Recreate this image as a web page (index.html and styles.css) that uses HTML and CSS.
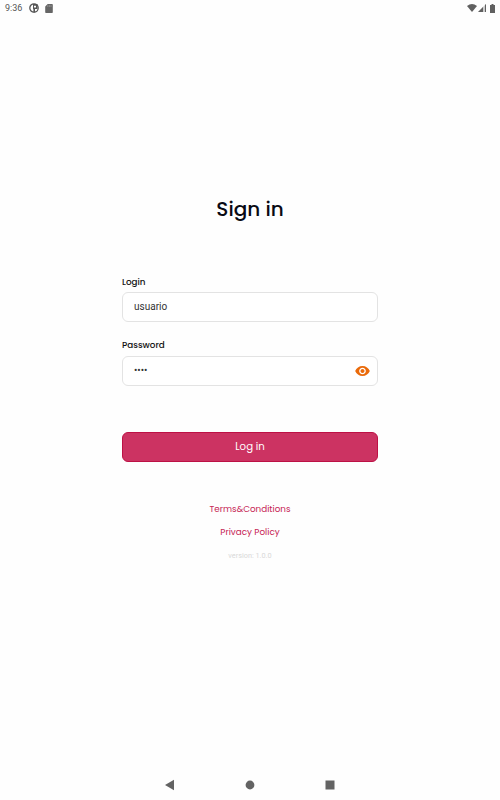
FILE: index.html
```
<!DOCTYPE html>
<html lang="en">
<head>
    <meta charset="UTF-8">
    <meta name="viewport" content="width=device-width, initial-scale=1.0">
    <title>Sign in</title>
    <link rel="stylesheet" href="styles.css">
</head>
<body>
    <header class="status-bar">
        <span class="time">9:36</span>
        <svg class="icon-app" width="10" height="10" viewBox="0 0 10 10">
            <circle cx="5" cy="5" r="4.2" fill="none" stroke="#555" stroke-width="1.3"/>
            <path d="M4 1h4.5v5H6v3.5H4.4V6H4Z" fill="#555"/>
            <path d="M5 2.8h2v1.8H5z" fill="#fff"/>
        </svg>
        <svg class="icon-sd" width="8" height="9" viewBox="0 0 8 9">
            <path d="M2.7 0H7q.8 0 .8.8v7.4q0 .8-.8.8H1q-.8 0-.8-.8V2.6Z" fill="#666"/>
            <path d="M2.8 1.3v1.5M4.4 1.3v1.5M6 1.3v1.5" stroke="#bbb" stroke-width=".6"/>
        </svg>
        <div class="status-right">
            <svg width="10" height="8" viewBox="0 0 10 8">
                <path d="M0 2Q5-2 10 2L5 8Z" fill="#606060"/>
            </svg>
            <svg width="8" height="8" viewBox="0 0 8 8">
                <path d="M8 0v8H0Z" fill="#ccc"/>
                <path d="M5 3v5H0ZM8 0v8H7V1Z" fill="#606060"/>
            </svg>
            <svg class="icon-battery" width="5" height="9" viewBox="0 0 5 9">
                <path d="M1.5 0h2v.9H5V9H0V.9h1.5Z" fill="#606060"/>
            </svg>
        </div>
    </header>

    <main class="container">
        <h1>Sign in</h1>
        <form class="login-form">
            <label for="login">Login</label>
            <div class="field">
                <input type="text" id="login" name="login" value="usuario">
            </div>
            <label for="password">Password</label>
            <div class="field">
                <input type="text" id="password" name="password" value="••••">
                <svg class="icon-eye" width="15" height="10" viewBox="1 4.5 22 15">
                    <path d="M12 4.5C7 4.5 2.73 7.61 1 12c1.73 4.39 6 7.5 11 7.5s9.27-3.11 11-7.5c-1.73-4.39-6-7.5-11-7.5zM12 17c-2.76 0-5-2.24-5-5s2.24-5 5-5 5 2.24 5 5-2.24 5-5 5zm0-8c-1.66 0-3 1.34-3 3s1.34 3 3 3 3-1.34 3-3-1.34-3-3-3z" fill="#ea6a0a"/>
                </svg>
            </div>
            <button type="button" class="login-btn">Log in</button>
        </form>
        <div class="links">
            <a href="#">Terms&amp;Conditions</a>
            <a href="#">Privacy Policy</a>
            <span class="version">version: 1.0.0</span>
        </div>
    </main>

    <nav class="nav-bar">
        <svg width="10" height="12" viewBox="0 0 10 12"><path d="M9 .8v10.4L0 6Z" fill="#636363"/></svg>
        <svg width="10" height="10" viewBox="0 0 10 10"><circle cx="5" cy="5" r="4.4" fill="#636363"/></svg>
        <svg width="10" height="10" viewBox="0 0 10 10"><path d="M.5.5h9v9h-9z" fill="#636363"/></svg>
    </nav>
</body>
</html>
```
FILE: styles.css
```
* {
    box-sizing: border-box;
}

body {
    margin: 0;
    height: 100vh;
    display: flex;
    flex-direction: column;
    overflow: hidden;
    background-color: #fefefe;
    font-family: Poppins, Inter, sans-serif;
}

svg {
    display: block;
}

.status-bar {
    display: flex;
    align-items: center;
    height: 16px;
    padding: 0 5px;
}

.time {
    width: 24px;
    font: 9px/16px Roboto, sans-serif;
    color: #555;
}

.icon-sd {
    margin-left: 6px;
}

.status-right {
    display: flex;
    align-items: center;
    gap: 1px;
    margin-left: auto;
}

.icon-battery {
    margin-left: 3px;
}

.container {
    flex: 1;
    width: 256px;
    margin: 0 auto;
    padding-top: 178px;
}

h1 {
    margin: 0 0 51px;
    font-size: 20px;
    line-height: 30px;
    font-weight: 500;
    text-align: center;
    color: #090a14;
}

.login-form {
    display: flex;
    flex-direction: column;
}

label {
    margin-bottom: 3.4px;
    font-size: 8.8px;
    line-height: 14px;
    font-weight: 500;
    color: #111;
}

.field {
    display: flex;
    align-items: center;
    height: 30px;
    margin-bottom: 16px;
    padding: 0 7px 0 11px;
    border: 1px solid #e3e3e3;
    border-radius: 6px;
    background-color: #fff;
}

.field input {
    flex: 1;
    min-width: 0;
    padding: 0;
    border: none;
    outline: none;
    background: none;
    font: 10px/14px Roboto, sans-serif;
    color: #333;
}

.login-btn {
    height: 30px;
    margin-top: 30.2px;
    padding: 0;
    border: 1px solid #bd1145;
    border-radius: 6px;
    background-color: #cc3362;
    color: #fff;
    font-family: inherit;
    font-size: 10.2px;
}

.links {
    display: flex;
    flex-direction: column;
    align-items: center;
    padding-top: 40px;
}

.links a {
    margin-bottom: 8px;
    font-size: 8.8px;
    line-height: 15px;
    color: #c62555;
    text-decoration: none;
}

.version {
    margin-top: 2px;
    font: 7.3px/12px Roboto, sans-serif;
    color: #d8d8d8;
}

.nav-bar {
    display: flex;
    justify-content: center;
    align-items: center;
    gap: 70px;
    height: 30px;
}
```
